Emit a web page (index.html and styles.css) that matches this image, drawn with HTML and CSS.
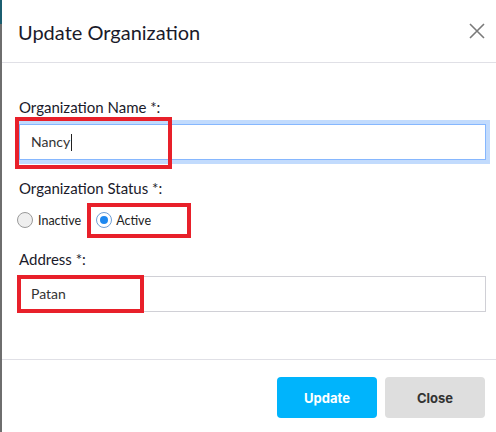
FILE: index.html
```html
<!DOCTYPE html>
<html>
<head>
<meta charset="utf-8">
<link rel="stylesheet" href="styles.css">
</head>
<body>
<div class="shell">
  <div class="edge"><div class="edge-top"></div></div>
  <div class="modal">
    <div class="modal-header">
      <h1 class="title">Update Organization</h1>
      <button class="close-x" aria-label="Close">
        <svg width="16" height="16" viewBox="0 0 16 16"><path d="M1 1 L15 15 M15 1 L1 15" stroke="#7a7a7a" stroke-width="1.6" fill="none"/></svg>
      </button>
    </div>
    <div class="modal-body">
      <label class="label">Organization Name *:</label>
      <div class="field">
        <div class="input focused">Nancy<span class="caret"></span></div>
        <div class="mark mark-name"></div>
      </div>
      <label class="label label-status">Organization Status *:</label>
      <div class="radios">
        <span class="radio-item"><span class="radio"></span><span class="radio-text">Inactive</span></span>
        <span class="radio-item active-item"><span class="radio checked"></span><span class="radio-text">Active</span><span class="mark mark-active"></span></span>
      </div>
      <label class="label label-address">Address *:</label>
      <div class="field">
        <div class="input">Patan</div>
        <div class="mark mark-address"></div>
      </div>
    </div>
    <div class="modal-footer">
      <button class="btn btn-primary">Update</button>
      <button class="btn btn-secondary">Close</button>
    </div>
  </div>
</div>
</body>
</html>
```
FILE: styles.css
```css
* { box-sizing: border-box; }
html, body { margin: 0; padding: 0; background: #fff; }
body { font-family: Lato, "Open Sans", sans-serif; color: #222; }
.shell { display: flex; width: 496px; height: 432px; }
.edge { width: 2px; background: #6e6e6e; flex: none; }
.edge-top { height: 24px; background: #1b5e70; }
.modal { flex: 1; display: flex; flex-direction: column; }
.modal-header {
  height: 63px; border-bottom: 1px solid #e0e0e6;
  display: flex; align-items: center; justify-content: space-between;
  padding: 0 10px 0 16px;
}
.title { margin: 0; font-size: 20px; font-weight: 400; color: #1a1a2a; line-height: 24px; padding-top: 2px; }
.close-x { border: 0; background: none; padding: 0; width: 18px; height: 18px; display: flex; align-items: center; justify-content: center; }
.modal-body { padding: 33px 10px 0 17px; height: 297px; border-bottom: 1px solid #e0e0e6; }
.label { display: block; font-size: 15px; line-height: 22px; color: #1a1a2a; }
.field { position: relative; margin-top: 6px; }
.input {
  height: 36px; border: 1px solid #d0d0d6; background: #fff;
  font-size: 14px; line-height: 34px; padding: 0 11px; color: #333;
}
.input.focused { border-color: #86b7fe; box-shadow: 0 0 0 4px #c2dbfd; }
.caret { display: inline-block; width: 1px; height: 17px; background: #222; vertical-align: -4px; margin-left: 1px; }
.mark { position: absolute; border: 4px solid #e8202a; pointer-events: none; }
.mark-name { left: -4px; top: -7px; width: 157px; height: 52px; }
.mark-address { left: -2px; top: -1px; width: 127px; height: 38px; }
.label-status { margin-top: 17px; }
.radios { display: flex; align-items: center; height: 30px; margin-top: 6px; }
.radio-item { position: relative; display: flex; align-items: center; font-size: 12.5px; color: #222; }
.radio { width: 16px; height: 16px; border-radius: 50%; border: 1px solid #9a9a9a; background: #efefef; margin-left: -2px; margin-right: 5px; display: inline-block; position: relative; }
.radio.checked { border-color: #6f9fd6; background: #fff; }
.radio.checked::after { content: ""; position: absolute; left: 3px; top: 3px; width: 8px; height: 8px; border-radius: 50%; background: #1e88f0; }
.active-item { margin-left: 17px; }
.active-item .radio { margin-right: 4px; }
.mark-active { left: -11px; top: -9px; width: 104px; height: 35px; }
.label-address { margin-top: 13px; }
.modal-footer { display: flex; justify-content: flex-end; gap: 8px; padding: 17px 11px 0 0; }
.btn { border: 0; border-radius: 4px; height: 41px; font-family: Inter, "Open Sans", sans-serif; font-weight: 700; font-size: 13px; cursor: pointer; }
.btn-primary { width: 100px; background: #00b4fc; color: #fff; }
.btn-secondary { width: 100px; background: #dedede; color: #333; }
```
